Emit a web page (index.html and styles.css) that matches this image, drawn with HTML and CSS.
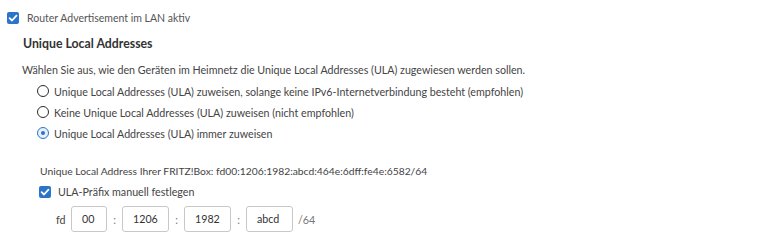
FILE: index.html
```html
<!DOCTYPE html>
<html lang="de">
<head>
<meta charset="utf-8">
<link rel="stylesheet" href="styles.css">
</head>
<body>
<div class="page">
  <label class="check top">
    <span class="box checked"><svg viewBox="0 0 12 12" width="12" height="12"><path d="M2.6 6.2 L5 8.5 L9.5 3.6" fill="none" stroke="#fff" stroke-width="1.8" stroke-linecap="round" stroke-linejoin="round"/></svg></span>
    <span class="label">Router Advertisement im LAN aktiv</span>
  </label>
  <section class="ula">
    <h2 class="title">Unique Local Addresses</h2>
    <p class="desc">Wählen Sie aus, wie den Geräten im Heimnetz die Unique Local Addresses (ULA) zugewiesen werden sollen.</p>
    <div class="radios">
      <label class="radio"><span class="circle"></span><span>Unique Local Addresses (ULA) zuweisen, solange keine IPv6-Internetverbindung besteht (empfohlen)</span></label>
      <label class="radio"><span class="circle"></span><span>Keine Unique Local Addresses (ULA) zuweisen (nicht empfohlen)</span></label>
      <label class="radio"><span class="circle on"></span><span>Unique Local Addresses (ULA) immer zuweisen</span></label>
    </div>
    <div class="details">
      <p class="info">Unique Local Address Ihrer FRITZ!Box: fd00:1206:1982:abcd:464e:6dff:fe4e:6582/64</p>
      <label class="check manual">
        <span class="box checked"><svg viewBox="0 0 12 12" width="12" height="12"><path d="M2.6 6.2 L5 8.5 L9.5 3.6" fill="none" stroke="#fff" stroke-width="1.8" stroke-linecap="round" stroke-linejoin="round"/></svg></span>
        <span class="label">ULA-Präfix manuell festlegen</span>
      </label>
      <div class="prefix">
        <span class="pre">fd</span>
        <span class="field f1">00</span>
        <span class="sep">:</span>
        <span class="field">1206</span>
        <span class="sep">:</span>
        <span class="field">1982</span>
        <span class="sep">:</span>
        <span class="field">abcd</span>
        <span class="suf">/64</span>
      </div>
    </div>
  </section>
</div>
</body>
</html>
```
FILE: styles.css
```css
html, body {
  margin: 0;
  padding: 0;
  background: #fff;
}
body {
  font-family: Lato, "Liberation Sans", sans-serif;
  font-size: 10.7px;
  color: #444;
}
.page {
  padding: 11px 0 0 7px;
}
.check {
  display: flex;
  align-items: center;
  gap: 8px;
  height: 13px;
}
.box {
  width: 12px;
  height: 12px;
  border-radius: 2px;
  background: #2a74c9;
  display: flex;
}
.top .label {
  color: #555;
  font-size: 10.5px;
}
.ula {
  padding-left: 16px;
}
.title {
  margin: 0;
  padding-top: 11px;
  font-size: 12.3px;
  font-weight: 700;
  color: #333;
  line-height: 18px;
}
.desc {
  margin: 0;
  padding-top: 9px;
  margin-left: -1px;
  line-height: 16px;
}
.radios {
  padding-left: 14px;
  padding-top: 5px;
  display: flex;
  flex-direction: column;
  gap: 5px;
}
.radio {
  display: flex;
  align-items: center;
  gap: 5px;
  height: 16px;
}
.circle {
  box-sizing: border-box;
  width: 12px;
  height: 12px;
  border-radius: 50%;
  border: 1.5px solid #2b2b2b;
  position: relative;
}
.circle.on {
  border-color: #2a74c9;
  background: #e8f1fb;
}
.circle.on::after {
  content: "";
  position: absolute;
  left: 2.5px;
  top: 2.5px;
  width: 4px;
  height: 4px;
  border-radius: 50%;
  background: #2a74c9;
}
.details {
  padding-left: 17px;
  padding-top: 22px;
}
.info {
  margin: 0;
  line-height: 16px;
  font-size: 10.3px;
}
.manual {
  margin-top: 6px;
  margin-left: -1px;
}
.manual .label {
  margin-left: -1px;
}
.prefix {
  display: flex;
  align-items: center;
  padding-left: 16px;
  padding-top: 8px;
}
.pre {
  width: 15px;
}
.field {
  box-sizing: border-box;
  width: 47px;
  height: 26px;
  border: 1px solid #c8c8c8;
  border-radius: 3px;
  padding-left: 10px;
  line-height: 24px;
  color: #333;
}
.field.f1 {
  width: 36px;
}
.sep {
  width: 15px;
  text-align: center;
  color: #777;
}
.suf {
  padding-left: 5px;
  color: #777;
}
```
